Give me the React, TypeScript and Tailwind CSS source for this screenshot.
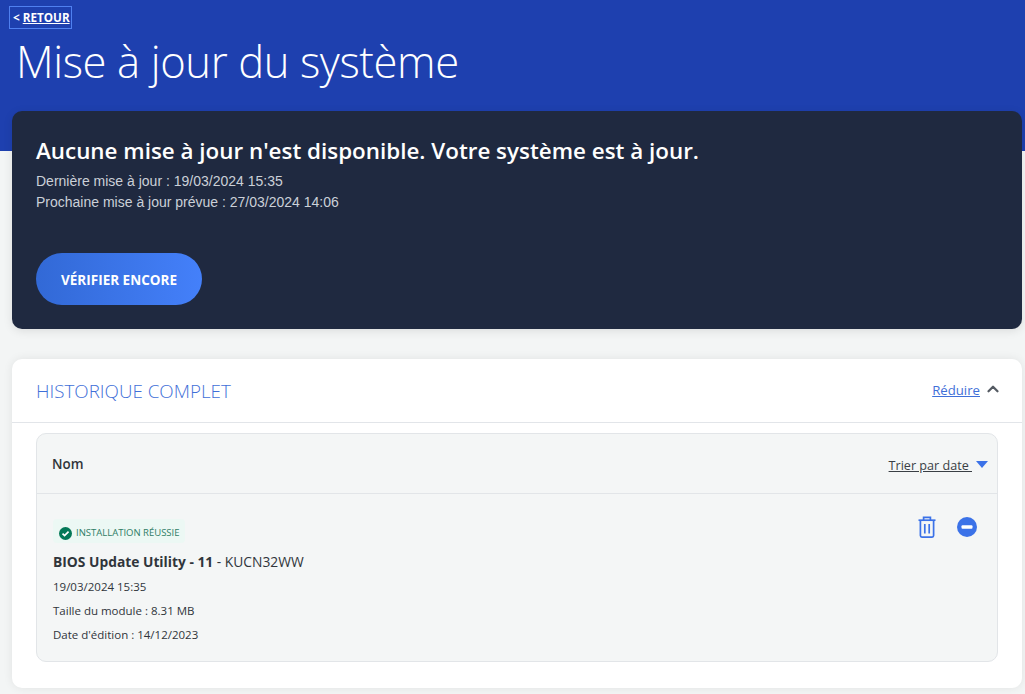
import React from 'react';
import { ChevronUp } from 'lucide-react';

const segoe = "font-['Open_Sans','Noto_Sans',sans-serif]";

const RemoveIcon = () => (
	<svg width="20" height="20" viewBox="0 0 20 20" className="block">
		<circle cx="10" cy="10" r="10" fill="#3b72e8" />
		<rect x="4.5" y="8.3" width="11" height="3.4" rx="1" fill="#fff" />
	</svg>
);

const TrashIcon = () => (
	<svg width="18" height="22" viewBox="0 0 18 22" fill="none" stroke="#3b72e8" strokeWidth="1.7" className="block">
		<path d="M0.5 4.2h17" />
		<path d="M5.6 4.2V1.4h6.8v2.8" />
		<path d="M2.4 4.2v15.4c0 .9.6 1.5 1.5 1.5h10.2c.9 0 1.5-.6 1.5-1.5V4.2" />
		<path d="M6.8 8v9.4M11.2 8v9.4" />
	</svg>
);

const CheckBadge = () => (
	<svg width="13" height="13" viewBox="0 0 14 14" className="block">
		<circle cx="7" cy="7" r="7" fill="#047857" />
		<path d="M3.8 7.2 6 9.3l4.3-4.4" fill="none" stroke="#fff" strokeWidth="1.8" />
	</svg>
);

export default function App() {
	return (
		<div className={`h-[694px] w-[1025px] overflow-hidden bg-[#f3f5f5] ${segoe}`}>
			<header className="h-[151px] bg-[#1e40af] pl-[9px] pt-[6px] text-white">
				<a className="flex h-[23px] w-[63px] items-center whitespace-nowrap border border-[#4f80f0] pl-[3px] text-[11.7px] font-bold leading-none">
					&lt;&nbsp;<span className="underline">RETOUR</span>
				</a>
				<h1 className="ml-[7px] mt-[4px] text-[43.6px] font-light leading-[56px] tracking-[-0.4px]">Mise à jour du système</h1>
			</header>

			<main className="mx-[12px] mt-[-40px] flex w-[1010px] flex-col gap-[30px]">
				<section className="h-[218px] rounded-[10px] bg-[#1f2940] pl-[24px] pt-[24px] shadow-[0_2px_10px_rgba(0,0,0,0.1)]">
					<h2 className="text-[22.4px] font-semibold leading-[32px] text-white">
						Aucune mise à jour n'est disponible. Votre système est à jour.
					</h2>
					<div className="mt-[4px] font-['Liberation_Sans',sans-serif] text-[14px] leading-[21px] text-[#cbd0d8]">
						<p>Dernière mise à jour : 19/03/2024 15:35</p>
						<p>Prochaine mise à jour prévue : 27/03/2024 14:06</p>
					</div>
					<button
						type="button"
						className="mt-[40px] h-[52px] w-[166px] rounded-full bg-gradient-to-r from-[#3269d6] to-[#4480fa] pt-[2px] text-[13.5px] font-bold text-white"
					>
						VÉRIFIER ENCORE
					</button>
				</section>

				<section className="h-[329px] rounded-[10px] bg-white shadow-[0_0_10px_rgba(0,0,0,0.08)]">
					<div className="flex h-[64px] items-center justify-between border-b border-[#e2e5e9] pl-[24px] pr-[20px]">
						<h2 className="mt-[2px] text-[18.8px] font-light text-[#3f6fd8]">HISTORIQUE COMPLET</h2>
						<div className="flex items-center gap-[4px]">
							<a className="text-[13.2px] text-[#3f6fd8] underline">Réduire</a>
							<ChevronUp size={18} strokeWidth={3} className="mb-[3px] text-[#555b63]" />
						</div>
					</div>

					<div className="mx-[24px] mt-[10px] h-[229px] rounded-[10px] border border-[#e2e5e8] bg-[#f4f6f6]">
						<div className="flex h-[60px] justify-between border-b border-[#e2e5e8] pl-[15px] pr-[9px]">
							<span className="mt-[20px] text-[13.4px] font-semibold leading-[20px] text-[#30353b]">Nom</span>
							<div className="mt-[23px] flex h-[18px] items-center gap-[4px]">
								<a className="whitespace-pre text-[12.6px] text-[#3a3f45] underline">Trier par date </a>
								<span className="mb-[3px] h-0 w-0 border-x-[6.5px] border-t-[7px] border-x-transparent border-t-[#3b72e8]" />
							</div>
						</div>

						<div className="relative pl-[16px] pt-[25px]">
							<div className="absolute right-[20px] top-[22px] flex items-center gap-[21px]">
								<TrashIcon />
								<div className="mb-[1px]">
									<RemoveIcon />
								</div>
							</div>
							<div className="flex h-[24px] w-[132px] items-center gap-[4px] rounded-[4px] bg-[#ecf8f4] pl-[6px] pt-[4px]">
								<CheckBadge />
								<span className="text-[9.5px] text-[#2f7d66]">INSTALLATION RÉUSSIE</span>
							</div>
							<p className="mt-[9px] text-[13.8px] leading-[20px] text-[#30353b]">
								<b className="font-bold">BIOS Update Utility - 11</b> - KUCN32WW
							</p>
							<p className="mt-[6px] text-[11.5px] leading-[18px] text-[#30353b]">19/03/2024 15:35</p>
							<p className="mt-[6px] text-[11.5px] leading-[18px] text-[#30353b]">Taille du module : 8.31 MB</p>
							<p className="mt-[6px] text-[11.5px] leading-[18px] text-[#30353b]">Date d'édition : 14/12/2023</p>
						</div>
					</div>
				</section>
			</main>
		</div>
	);
}
